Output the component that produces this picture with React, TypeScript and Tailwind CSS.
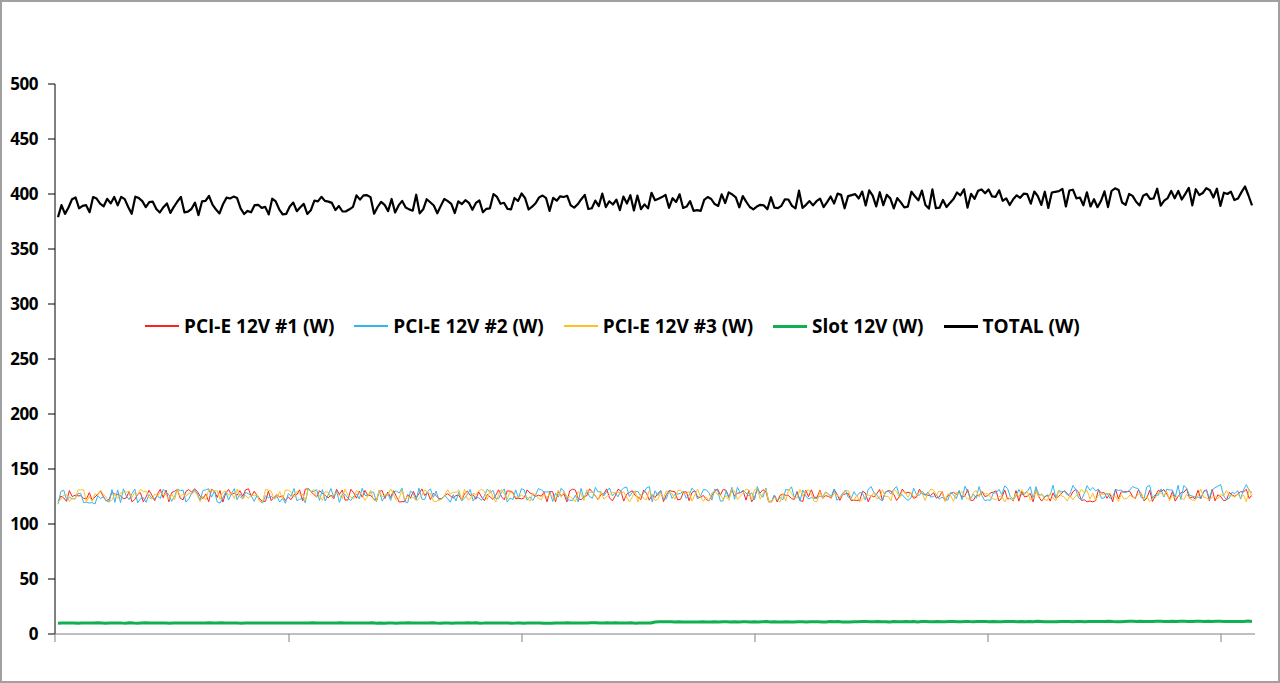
import React from "react";

// simple seeded random so the picture is stable
const rng = (seed: number) => () => {
  seed = (seed * 16807) % 2147483647;
  return (seed - 1) / 2147483646;
};

const X0 = 55;
const X1 = 1255;
const Y0 = 634;
const PX = 1.1;

const series = (seed: number, n: number, base: (t: number) => number, amp: number) => {
  const r = rng(seed);
  const pts: string[] = [];
  for (let i = 0; i <= n; i++) {
    const t = i / n;
    const v = base(t) + (r() - 0.5) * 2 * amp;
    pts.push(`${(X0 + 3 + t * (X1 - X0 - 6)).toFixed(1)},${(Y0 - v * PX).toFixed(1)}`);
  }
  return pts.join(" ");
};

const lines = [
  { color: "#ff2020", w: 1, pts: series(11, 420, () => 126, 6) },
  { color: "#33b5f0", w: 1, pts: series(29, 420, (t) => 125 + t * 4, 7) },
  { color: "#ffc020", w: 1, pts: series(47, 420, () => 126, 6) },
  { color: "#10b050", w: 3, pts: series(5, 300, (t) => (t < 0.5 ? 10 : 10.5 + t), 0.2) },
  { color: "#000000", w: 2.2, pts: series(73, 340, (t) => 388 + t * 10, 9) },
];

const legend = [
  { color: "#ff2020", label: "PCI-E 12V #1 (W)", h: "h-[2px]" },
  { color: "#33b5f0", label: "PCI-E 12V #2 (W)", h: "h-[2px]" },
  { color: "#ffc020", label: "PCI-E 12V #3 (W)", h: "h-[2px]" },
  { color: "#10b050", label: "Slot 12V (W)", h: "h-[3px]" },
  { color: "#000000", label: "TOTAL (W)", h: "h-[3px]" },
];

export default function App() {
  return (
    <div className="relative w-[1280px] h-[683px] bg-white border-2 border-[#a0a0a0] overflow-hidden" style={{ fontFamily: "'Open Sans', sans-serif" }}>
      <svg className="absolute -left-[2px] -top-[2px]" width="1280" height="683">
        <line x1={X0} y1={84} x2={X0} y2={Y0} stroke="#000" strokeWidth="1" />
        <line x1={X0} y1={Y0} x2={X1} y2={Y0} stroke="#808080" strokeWidth="1" />
        {[0, 50, 100, 150, 200, 250, 300, 350, 400, 450, 500].map((v) => (
          <g key={v}>
            <line x1={48} y1={Y0 - v * PX} x2={X0} y2={Y0 - v * PX} stroke="#000" />
            <text x={38} y={Y0 - v * PX + 6} textAnchor="end" fontSize="17" fontWeight="700" fontFamily="'Open Sans', sans-serif" letterSpacing="-0.5">
              {v}
            </text>
          </g>
        ))}
        {[55, 289, 522, 755, 988, 1221].map((x) => (
          <line key={x} x1={x} y1={Y0} x2={x} y2={642} stroke="#808080" />
        ))}
        {lines.map((l, i) => (
          <polyline key={i} points={l.pts} fill="none" stroke={l.color} strokeWidth={l.w} strokeLinejoin="round" />
        ))}
      </svg>
      <div className="absolute left-[143px] top-[310px] flex items-center gap-[20px] bg-white text-[19px] font-bold text-black">
        {legend.map((l) => (
          <div key={l.label} className="flex items-center gap-[5px]">
            <span className={`w-[34px] ${l.h}`} style={{ backgroundColor: l.color }} />
            <span>{l.label}</span>
          </div>
        ))}
      </div>
    </div>
  );
}
